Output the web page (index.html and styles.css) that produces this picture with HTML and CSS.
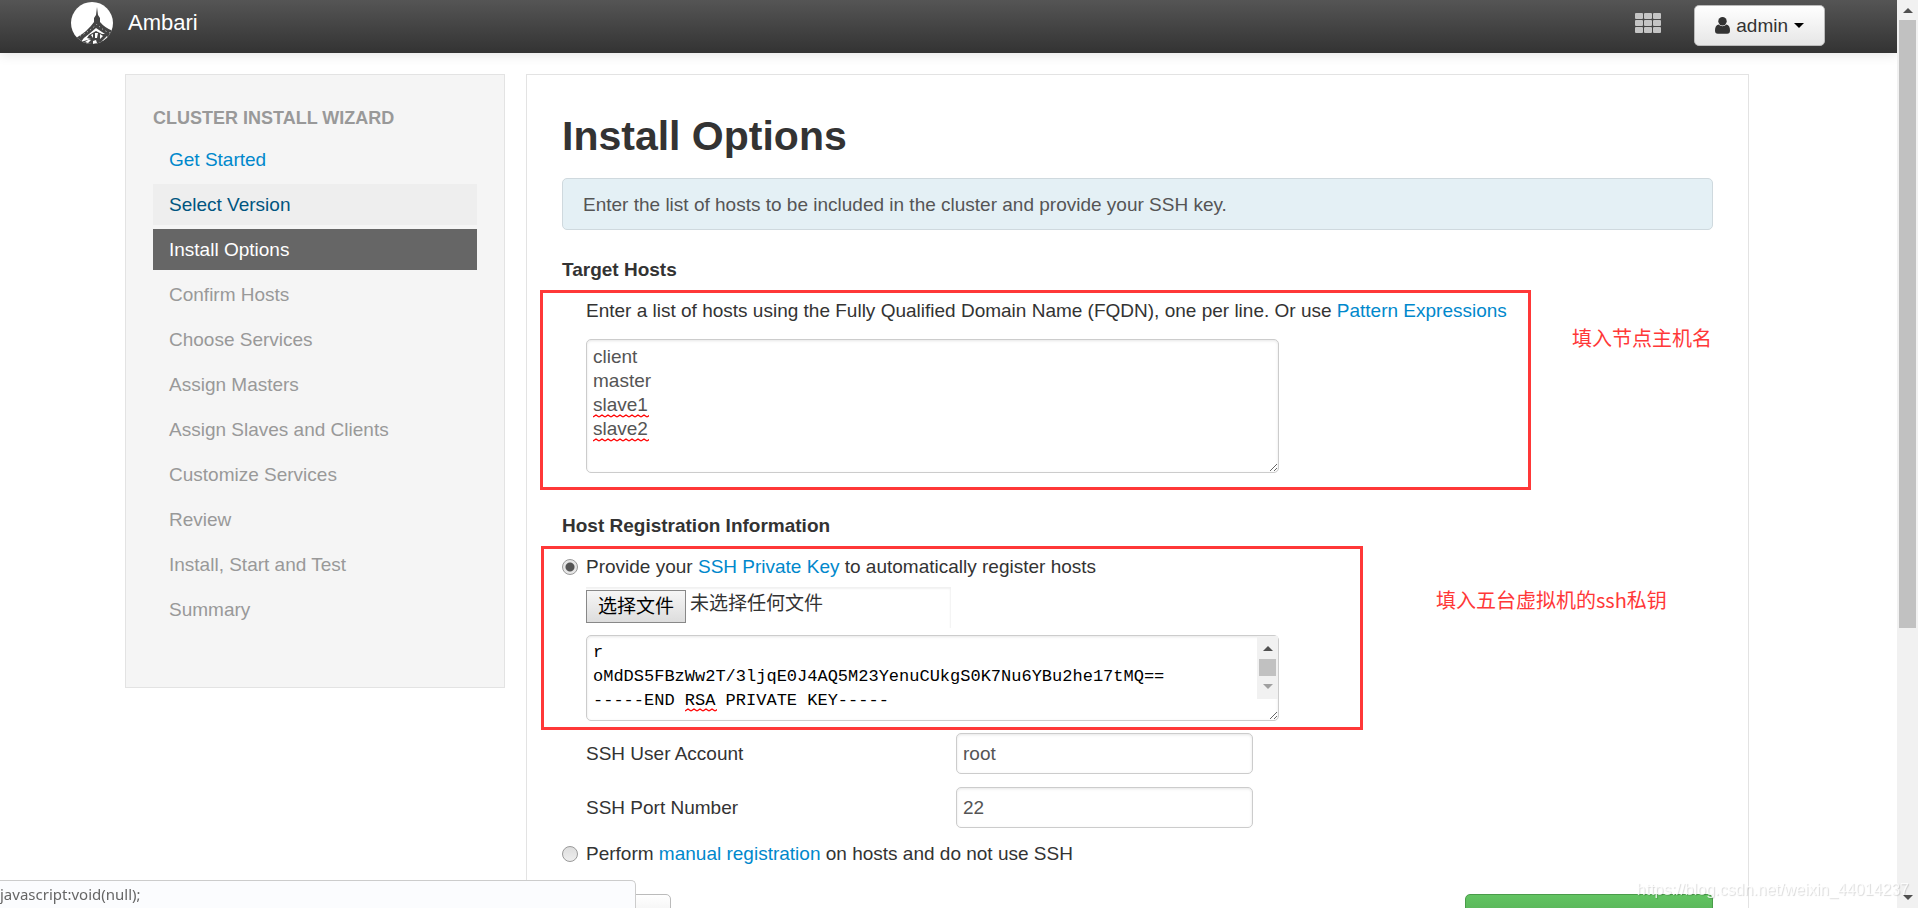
FILE: index.html
```html
<!DOCTYPE html>
<html lang="en">
    <head>
        <meta charset="utf-8"/>
        <title>Ambari</title>
        <link rel="stylesheet" href="styles.css">
    </head>

    <body>
        <!-- Top bar -->
        <header class="navbar">
            <a class="brand" href="#">
                <svg class="logo" viewBox="0 0 42 42" aria-hidden="true">
                    <defs>
                        <clipPath id="disc"><circle cx="21" cy="21" r="21"/></clipPath>
                    </defs>
                    <circle cx="21" cy="21" r="21" fill="#fff"/>
                    <g clip-path="url(#disc)">
                        <path fill="#444" d="M26 5 L27 13 L29 16 L29 20 Q34 26 42 29 L44 44 L0 44 L5 36 Q17 29 23 20 L23 16 L25 13 Z"/>
                        <path fill="none" stroke="#ddd" stroke-width="1" stroke-dasharray="1 3" d="M9 34 Q19 29 26 22 Q31 28 39 31"/>
                        <path fill="#fff" d="M10 40 Q13 35 18 32 L25 26 L34 32 L31 32 L25 29 L18 33 L16 36 L20 37 L13 39 Z"/>
                        <path fill="#fff" d="M24 31 L27 31 L26 36 L24 36 Z M29 32 L32 34 L29 37 Z M31 39 L36 34 L37 36 L34 39 Z M22 39 L25 38 L26 41 L22 42 Z M17 38 L20 38 L17 41 L14 40 Z M20 33 L22 32 L22 36 Z"/>
                    </g>
                </svg>
                <span>Ambari</span>
            </a>
            <div class="nav-right">
                <button class="views" type="button" aria-label="Views">
                    <svg viewBox="0 0 26 20" width="26" height="20" fill="#c4c4c4" aria-hidden="true">
                        <rect x="0" y="0" width="8" height="6" rx="1"/><rect x="9" y="0" width="8" height="6" rx="1"/><rect x="18" y="0" width="8" height="6" rx="1"/>
                        <rect x="0" y="7" width="8" height="6" rx="1"/><rect x="9" y="7" width="8" height="6" rx="1"/><rect x="18" y="7" width="8" height="6" rx="1"/>
                        <rect x="0" y="14" width="8" height="6" rx="1"/><rect x="9" y="14" width="8" height="6" rx="1"/><rect x="18" y="14" width="8" height="6" rx="1"/>
                    </svg>
                </button>
                <button class="btn user" type="button">
                    <svg viewBox="0 0 15 17" width="15" height="17" fill="#333" aria-hidden="true">
                        <circle cx="7.5" cy="4.3" r="4.2"/>
                        <path d="M3.4 7.6 Q7.5 11 11.6 7.6 Q15 8.6 15 13.5 Q15 16.8 12.2 16.8 L2.8 16.8 Q0 16.8 0 13.5 Q0 8.6 3.4 7.6 Z"/>
                    </svg>
                    admin
                    <span class="caret"></span>
                </button>
            </div>
        </header>

        <div class="container">
            <!-- Wizard steps -->
            <nav class="well">
                <h2 class="nav-header">Cluster Install Wizard</h2>
                <ul class="steps">
                    <li><a href="#">Get Started</a></li>
                    <li><a class="hovered" href="#">Select Version</a></li>
                    <li><a class="active" href="#">Install Options</a></li>
                    <li><span>Confirm Hosts</span></li>
                    <li><span>Choose Services</span></li>
                    <li><span>Assign Masters</span></li>
                    <li><span>Assign Slaves and Clients</span></li>
                    <li><span>Customize Services</span></li>
                    <li><span>Review</span></li>
                    <li><span>Install, Start and Test</span></li>
                    <li><span>Summary</span></li>
                </ul>
            </nav>

            <!-- Step content -->
            <main class="content">
                <h1>Install Options</h1>
                <p class="alert">Enter the list of hosts to be included in the cluster and provide your SSH key.</p>

                <section class="target-hosts">
                    <h3>Target Hosts</h3>
                    <div class="indent">
                        <label class="line" for="hosts">Enter a list of hosts using the Fully Qualified Domain Name (FQDN), one per line. Or use <a href="#">Pattern Expressions</a></label>
                        <div class="area">
                            <textarea id="hosts" class="field hosts" spellcheck="false">client
master
slave1
slave2</textarea>
                            <span class="squiggle slave1"></span>
                            <span class="squiggle slave2"></span>
                        </div>
                    </div>
                    <div class="mark mark-hosts"></div>
                    <p class="note note-hosts" lang="zh">填入节点主机名</p>
                </section>

                <section class="registration">
                    <h3>Host Registration Information</h3>
                    <div class="option">
                        <input type="radio" id="useSsh" name="registration" checked>
                        <label for="useSsh">Provide your <a href="#">SSH Private Key</a> to automatically register hosts</label>
                    </div>
                    <div class="indent">
                        <div class="file" lang="zh">
                            <button class="file-button" type="button">选择文件</button>
                            <span class="file-name">未选择任何文件</span>
                        </div>
                        <div class="area">
                            <textarea class="field key" aria-label="SSH Private Key" spellcheck="false">r
oMdDS5FBzWw2T/3ljqE0J4AQ5M23YenuCUkgS0K7Nu6YBu2he17tMQ==
-----END RSA PRIVATE KEY-----</textarea>
                            <span class="squiggle rsa"></span>
                            <div class="key-scroll">
                                <span class="arrow up"></span>
                                <span class="key-thumb"></span>
                                <span class="arrow down pale"></span>
                            </div>
                        </div>
                        <div class="row">
                            <label for="sshUser">SSH User Account</label>
                            <input class="field" type="text" id="sshUser" value="root">
                        </div>
                        <div class="row">
                            <label for="sshPort">SSH Port Number</label>
                            <input class="field" type="text" id="sshPort" value="22">
                        </div>
                    </div>
                    <div class="option manual">
                        <input type="radio" id="manual" name="registration">
                        <label for="manual">Perform <a href="#">manual registration</a> on hosts and do not use SSH</label>
                    </div>
                    <div class="mark mark-key"></div>
                    <p class="note note-key" lang="zh">填入五台虚拟机的ssh私钥</p>
                </section>

                <div class="actions">
                    <button class="btn" type="button">&larr; Back</button>
                    <button class="btn btn-success" type="button">Register and Confirm &rarr;</button>
                </div>
            </main>
        </div>

        <!-- Browser overlays -->
        <div class="status">javascript:void(null);</div>
        <div class="scrollbar">
            <span class="arrow up"></span>
            <span class="thumb"></span>
            <span class="arrow down"></span>
        </div>
        <div class="watermark">https://blog.csdn.net/weixin_44014237</div>
    </body>
</html>
```

FILE: styles.css
```css
* {
    box-sizing: border-box;
}
body {
    margin: 0;
    padding-right: 21px;
    height: 100vh;
    overflow: hidden;
    background-color: #fff;
    color: #333;
    font-family: "Liberation Sans", Arial, sans-serif;
    font-size: 19px;
    line-height: 25px;
}
h1, h2, h3, p, ul {
    margin: 0;
    padding: 0;
}
a {
    color: #08c;
    text-decoration: none;
}
button, input, textarea {
    font-family: inherit;
    font-size: inherit;
    line-height: inherit;
}

/* top bar */
.navbar {
    display: flex;
    justify-content: space-between;
    height: 53px;
    padding: 0 72px 0 71px;
    background-image: linear-gradient(#555, #333);
    box-shadow: 0 1px 12px rgba(0, 0, 0, 0.12);
}
.brand {
    display: flex;
    align-items: flex-start;
    gap: 15px;
    padding-top: 2px;
    color: #fff;
    font-size: 22px;
    line-height: 42px;
}
.logo {
    width: 42px;
    height: 42px;
}
.nav-right {
    display: flex;
    align-items: flex-start;
    gap: 33px;
}
.views {
    display: flex;
    padding: 13px 0;
    border: 0;
    background: none;
}
.btn {
    padding: 7px 20px;
    border: 1px solid #bbb;
    border-radius: 5px;
    background-image: linear-gradient(#fff, #e6e6e6);
    color: #333;
}
.user {
    display: flex;
    align-items: center;
    gap: 6px;
    height: 41px;
    margin-top: 5px;
}
.caret {
    border-top: 5px solid #000;
    border-left: 5px solid transparent;
    border-right: 5px solid transparent;
}

.container {
    display: grid;
    grid-template-columns: 380px 1fr;
    align-items: start;
    gap: 21px;
    padding: 21px 148px 0 125px;
}

/* wizard steps */
.well {
    padding: 27px 27px 57px;
    border: 1px solid #e3e3e3;
    background-color: #f5f5f5;
}
.nav-header {
    padding: 4px 0 8px;
    color: #999;
    font-size: 18px;
    line-height: 25px;
    text-transform: uppercase;
}
.steps {
    display: grid;
    gap: 4px;
    list-style: none;
}
.steps a, .steps span {
    display: block;
    padding: 8px 16px;
    color: #999;
}
.steps a {
    color: #08c;
}
.steps a.hovered {
    background-color: #eee;
    color: #005580;
}
.steps a.active {
    background-color: #666;
    color: #fff;
}

/* step content */
.content {
    padding: 36px 35px;
    border: 1px solid #e3e3e3;
}
h1 {
    font-size: 41px;
    line-height: 50px;
}
.alert {
    margin: 17px 0 27px;
    padding: 13px 20px 12px;
    border: 1px solid #cfd9de;
    border-radius: 5px;
    background-color: #e4f0f5;
    color: #555;
}
section {
    position: relative;
}
h3 {
    font-size: 19px;
    line-height: 25px;
}
.indent {
    padding-left: 24px;
}
.line {
    display: block;
    padding: 16px 0;
}
.area {
    position: relative;
    width: 693px;
}
.field {
    display: block;
    padding: 5px 6px;
    border: 1px solid #ccc;
    border-radius: 5px;
    background-color: #fff;
    box-shadow: inset 0 1px 3px rgba(0, 0, 0, 0.1);
    color: #555;
}
textarea.field {
    width: 100%;
    line-height: 24px;
}
.hosts {
    height: 134px;
}
.key {
    height: 86px;
    overflow: hidden;
}
textarea.key {
    color: #000;
    font-family: "Liberation Mono", "Courier New", monospace;
    font-size: 17px;
}

/* spell checker underline */
.squiggle {
    position: absolute;
    left: 7px;
    width: 56px;
    height: 4px;
    background: url("data:image/svg+xml,%3Csvg xmlns='http://www.w3.org/2000/svg' width='6' height='4'%3E%3Cpath d='M0 3 L3 1 L6 3' fill='none' stroke='red' stroke-width='1.4'/%3E%3C/svg%3E") repeat-x;
}
.slave1 {
    top: 75px;
}
.slave2 {
    top: 99px;
}
.rsa {
    top: 73px;
    left: 99px;
    width: 32px;
}

.registration {
    padding-top: 40px;
}
.option {
    display: flex;
    align-items: center;
    gap: 8px;
    padding-top: 16px;
}
.option.manual {
    padding-top: 12px;
}
.option input {
    appearance: none;
    width: 16px;
    height: 16px;
    margin: 0;
    border: 1px solid #999;
    border-radius: 50%;
    background-image: linear-gradient(#ddd, #eee);
}
.option input:checked {
    background-image: radial-gradient(circle, #555 4px, #e6e6e6 5px);
}
.file {
    display: flex;
    align-items: flex-start;
    gap: 4px;
    width: 365px;
    height: 41px;
    margin: 8px 0 7px;
    padding-top: 3px;
    box-shadow: inset -1px 2px 2px rgba(0, 0, 0, 0.06);
    font-family: "Liberation Sans", "Noto Sans CJK SC", sans-serif;
}
.file-button {
    height: 33px;
    padding: 0 11px;
    border: 1px solid #888;
    background-image: linear-gradient(#f6f6f6, #ddd);
    color: #000;
}
.file-name {
    line-height: 27px;
}
.row {
    display: grid;
    grid-template-columns: 370px 297px;
    align-items: center;
    padding: 12px 0 1px;
}
.row .field {
    width: 100%;
    height: 41px;
}

.arrow {
    width: 0;
    border: 5px solid transparent;
}
.up {
    border-top: 0;
    border-bottom-color: #505050;
}
.down {
    border-bottom: 0;
    border-top-color: #505050;
}
.down.pale {
    border-top-color: #a0a0a0;
}
.key-scroll {
    position: absolute;
    top: 1px;
    right: 1px;
    display: flex;
    flex-direction: column;
    align-items: center;
    gap: 8px;
    width: 21px;
    height: 63px;
    padding-top: 10px;
    background-color: #f1f1f1;
}
.key-thumb {
    width: 17px;
    height: 17px;
    background-color: #c1c1c1;
}

/* annotations */
.mark {
    position: absolute;
    border: 3px solid #ff3838;
    pointer-events: none;
}
.mark-hosts {
    top: 33px;
    left: -22px;
    width: 991px;
    height: 200px;
}
.mark-key {
    top: 73px;
    left: -21px;
    width: 822px;
    height: 184px;
}
.note {
    position: absolute;
    color: #ff3838;
    font-family: "Noto Sans CJK SC", sans-serif;
    font-size: 20px;
    white-space: nowrap;
}
.note-hosts {
    top: 68px;
    left: 1010px;
}
.note-key {
    top: 114px;
    left: 874px;
}

.actions {
    display: flex;
    justify-content: space-between;
    padding-top: 28px;
}
.actions .btn {
    min-width: 108px;
}
.actions .btn-success {
    min-width: 248px;
    border-color: #4a9c4a;
    background-image: linear-gradient(#62c462, #51a351);
    color: #2f7a2f;
}

/* browser overlays */
.status {
    position: fixed;
    bottom: 0;
    left: 0;
    width: 636px;
    height: 28px;
    border: 1px solid #ccc;
    border-width: 1px 1px 0 0;
    border-top-right-radius: 5px;
    background-color: #fbfcfe;
    color: #666;
    font-family: "Noto Sans", sans-serif;
    font-size: 15px;
    line-height: 26px;
}
.scrollbar {
    position: fixed;
    top: 0;
    right: 0;
    bottom: 0;
    display: flex;
    flex-direction: column;
    align-items: center;
    width: 21px;
    padding: 8px 0;
    background-color: #f1f1f1;
}
.thumb {
    width: 17px;
    height: 67vh;
    margin: 7px 0 auto;
    background-color: #c1c1c1;
}
.watermark {
    position: fixed;
    right: 9px;
    bottom: 6px;
    color: rgba(255, 255, 255, 0.8);
    font-size: 16px;
    text-shadow: 1px 1px 1px rgba(0, 0, 0, 0.15);
}
```
